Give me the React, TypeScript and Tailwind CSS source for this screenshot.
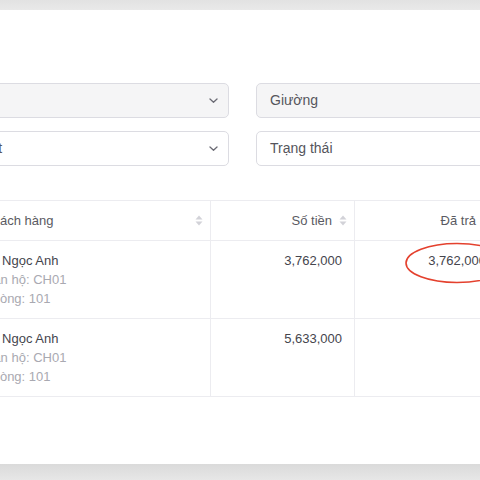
import { ReactNode } from 'react'

// ─────────────────────────────────────────────────────────────
// Small drawings
// ─────────────────────────────────────────────────────────────

function Chevron() {
  return (
    <svg width="9" height="5" viewBox="0 0 9 5" fill="none" className="shrink-0">
      <path d="M1 1 L4.5 4.2 L8 1" stroke="#6b6b74" strokeWidth="1.3" strokeLinecap="round" strokeLinejoin="round" />
    </svg>
  )
}

function SortIcon() {
  return (
    <svg width="8" height="11" viewBox="0 0 8 11" className="shrink-0">
      <path d="M0.5 4.5 L4 0.5 L7.5 4.5 Z" fill="#d2d2d8" />
      <path d="M0.5 6.5 L4 10.5 L7.5 6.5 Z" fill="#d2d2d8" />
    </svg>
  )
}

// ─────────────────────────────────────────────────────────────
// Filters
// ─────────────────────────────────────────────────────────────

interface SelectBoxProps {
  text?: string
  disabled?: boolean
  chevron?: boolean
}

function SelectBox({ text, disabled, chevron }: SelectBoxProps) {
  return (
    <div
      className={`h-[35px] flex items-center justify-between pl-[13px] pr-[10px] rounded-[5px] border border-[#dcdce2] ${
        disabled ? 'bg-[#f5f5f6]' : 'bg-white'
      }`}
    >
      <span className="text-[14px] text-[#55555c] whitespace-nowrap">{text}</span>
      {chevron && <Chevron />}
    </div>
  )
}

// ─────────────────────────────────────────────────────────────
// Table
// ─────────────────────────────────────────────────────────────

const COLS = 'grid grid-cols-[255px_144px_144px]'

interface Row {
  name: string
  apartment: string
  room: string
  amount: string
  paid?: string
}

const ROWS: Row[] = [
  { name: 'Lê Ngọc Anh', apartment: 'Căn hộ: CH01', room: 'Phòng: 101', amount: '3,762,000', paid: '3,762,000' },
  { name: 'Lê Ngọc Anh', apartment: 'Căn hộ: CH01', room: 'Phòng: 101', amount: '5,633,000' },
]

function HeaderCell({ children, align = 'right' }: { children: ReactNode; align?: 'left' | 'right' }) {
  return (
    <div
      className={`flex items-center border-r border-[#ececf0] pr-[7px] ${
        align === 'left' ? 'justify-between pl-[28px]' : 'justify-end gap-[7px]'
      }`}
    >
      <span className="whitespace-nowrap">{children}</span>
      <SortIcon />
    </div>
  )
}

export default function App() {
  return (
    <div className="w-[480px] h-[480px] overflow-hidden flex flex-col bg-[#e6e6e6] font-['Liberation_Sans',Arial,sans-serif]">
      <div className="h-[10px] shrink-0 bg-gradient-to-b from-[#e2e2e2] to-[#e9e9e9]" />

      <div className="h-[454px] shrink-0 bg-white relative overflow-hidden">
        {/* Filter selects */}
        <div className="ml-[-70px] pt-[73px] grid grid-cols-[299px_299px] gap-x-[27px] gap-y-[13px]">
          <SelectBox disabled chevron />
          <SelectBox text="Giường" disabled />
          <SelectBox text="Chọn đợt" chevron />
          <SelectBox text="Trạng thái" />
        </div>

        {/* Bills table */}
        <div className="ml-[-44px] mt-[34px] w-max border-t border-[#ececf0] text-[13px]">
          <div className={`${COLS} h-[40px] border-b border-[#ececf0] text-[#5a5a62]`}>
            <HeaderCell align="left">Khách hàng</HeaderCell>
            <HeaderCell>Số tiền</HeaderCell>
            <HeaderCell>Đã trả</HeaderCell>
          </div>

          {ROWS.map((row, i) => (
            <div key={i} className={`${COLS} h-[78px] border-b border-[#ececf0] leading-[19px]`}>
              <div className="border-r border-[#ececf0] pl-[28px] pr-3 py-[10px] whitespace-nowrap">
                <div className="text-[#45454d]">{row.name}</div>
                <div className="text-[#a9a9b1]">{row.apartment}</div>
                <div className="text-[#a9a9b1]">{row.room}</div>
              </div>
              <div className="border-r border-[#ececf0] pr-3 py-[10px] text-right text-[#45454d]">{row.amount}</div>
              <div className="border-r border-[#ececf0] pr-3 py-[10px] text-right text-[#45454d]">{row.paid}</div>
            </div>
          ))}
        </div>

        {/* Hand-drawn highlight round the paid amount */}
        <svg
          className="absolute left-[404px] top-[231px] pointer-events-none"
          width="110"
          height="44"
          viewBox="0 0 110 44"
          fill="none"
        >
          <ellipse cx="53" cy="22" rx="51" ry="19.5" stroke="#e4412e" strokeWidth="1.6" />
        </svg>
      </div>

      <div className="flex-1 bg-gradient-to-b from-[#dadada] to-[#e7e7e7]" />
    </div>
  )
}
